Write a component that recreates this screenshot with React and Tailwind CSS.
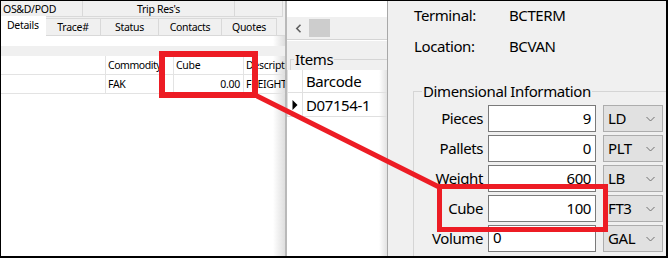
import React from 'react';

const dims = [
  { label: 'Pieces', value: '9', unit: 'LD' },
  { label: 'Pallets', value: '0', unit: 'PLT' },
  { label: 'Weight', value: '600', unit: 'LB' },
  { label: 'Cube', value: '100', unit: 'FT3' },
  { label: 'Volume', value: '0', unit: 'GAL', alignLeft: true },
];

const tabs = [
  { name: 'Details', w: 'w-[45px]', active: true },
  { name: 'Trace#', w: 'w-[55px]' },
  { name: 'Status', w: 'w-[58px]' },
  { name: 'Contacts', w: 'w-[63px]' },
  { name: 'Quotes', w: 'w-[55px]' },
];

function Chevron() {
  return (
    <svg width="9" height="6" viewBox="0 0 9 6" className="shrink-0">
      <polyline points="0.5,1 4.5,5 8.5,1" fill="none" stroke="#707070" strokeWidth="1" />
    </svg>
  );
}

function LeftPanel() {
  return (
    <div className="flex w-[286px] shrink-0 flex-col border-r-2 border-[#b9b9b9] text-[10.5px] tracking-[-0.3px]">
      {/* upper tab row */}
      <div className="flex h-[16px] shrink-0 bg-[#f0f0f0] leading-[16px]">
        <div className="w-[82px] border-r border-b border-[#d9d9d9] pl-[2px]">OS&amp;D/POD</div>
        <div className="w-[152px] border-r border-b border-[#d9d9d9] text-center">Trip Res's</div>
        <div className="w-[48px] border-r border-b border-[#d9d9d9]" />
      </div>
      {/* lower tab row */}
      <div className="flex h-[19px] shrink-0 bg-[#f0f0f0]">
        {tabs.map((t) => (
          <div
            key={t.name}
            className={
              t.active
                ? `${t.w} -mt-[1px] bg-white pl-[6px] leading-[19px]`
                : `${t.w} mt-[1px] border-r border-t border-b border-[#d9d9d9] text-center leading-[17px]`
            }
          >
            {t.name}
          </div>
        ))}
        <div className="flex-1 border-b border-[#d9d9d9]" />
      </div>
      {/* content */}
      <div className="flex flex-1 flex-col bg-[linear-gradient(to_right,#ffffff_calc(100%-12px),#dedede)]">
        <div className="h-[10px]" />
        <div className="h-[10px] bg-[#f0f0f0]" />
        <div className="flex h-[19px] border-b border-[#e3e3e3] leading-[18px]">
          <div className="w-[105px] border-r border-[#e3e3e3]" />
          <div className="w-[68px] whitespace-nowrap border-r border-[#e3e3e3] pl-[2px] tracking-[-0.45px]">Commodity</div>
          <div className="w-[70px] border-r border-[#e3e3e3] pl-[2px]">Cube</div>
          <div className="flex-1 overflow-hidden whitespace-nowrap pl-[2px]">Description</div>
        </div>
        <div className="flex h-[19px] border-b border-[#e3e3e3] leading-[18px]">
          <div className="w-[105px] border-r border-[#e3e3e3]" />
          <div className="w-[68px] border-r border-[#e3e3e3] pl-[2px]">FAK</div>
          <div className="w-[70px] border-r border-[#e3e3e3] pr-[3px] text-right">0.00</div>
          <div className="flex-1 overflow-hidden whitespace-nowrap pl-[2px]">FREIGHT</div>
        </div>
      </div>
    </div>
  );
}

function MiddlePanel() {
  return (
    <div className="flex w-[101px] shrink-0 flex-col border-r border-[#a8a8a8] text-[15px] tracking-[-0.4px]">
      <div className="h-[16px] shrink-0 bg-white" />
      <div className="flex h-[22px] shrink-0 items-center bg-[#f0f0f0]">
        <div className="flex w-[22px] justify-center">
          <svg width="7" height="9" viewBox="0 0 7 9">
            <polyline points="5.5,0.8 1.8,4.5 5.5,8.2" fill="none" stroke="#606060" strokeWidth="1.6" />
          </svg>
        </div>
        <div className="h-[18px] w-[21px] bg-[#cdcdcd]" />
      </div>
      <div className="h-[2px] shrink-0 border-t border-[#d4d4d4] bg-white" />
      <div className="h-[9px] shrink-0 bg-[#f0f0f0]" />
      <div className="flex h-[20px] shrink-0 items-start bg-[#f0f0f0]">
        <div className="ml-[3px] mt-[9px] h-[11px] w-[4px] border-l border-t border-[#d5d5d5]" />
        <span className="-mt-[1px] px-[1px] leading-[20px]">Items</span>
        <div className="mt-[9px] h-px flex-1 bg-[#d5d5d5]" />
      </div>
      <div className="flex flex-1 flex-col bg-[linear-gradient(to_right,#ffffff_calc(100%-8px),#e2e2e2)]">
        <div className="flex h-[23px] border-b border-[#e0e0e0]">
          <div className="w-[16px] border-x border-[#e0e0e0]" />
          <div className="pl-[3px] leading-[22px]">Barcode</div>
        </div>
        <div className="flex h-[24px] border-b border-[#e0e0e0]">
          <div className="flex w-[16px] items-center justify-center border-x border-[#e0e0e0]">
            <svg width="6" height="10" viewBox="0 0 6 10">
              <polygon points="0.5,0 5.5,5 0.5,10" fill="#000" />
            </svg>
          </div>
          <div className="pl-[3px] leading-[24px]">D07154-1</div>
        </div>
      </div>
    </div>
  );
}

function RightPanel() {
  return (
    <div className="flex flex-1 flex-col bg-[#f0f0f0] text-[15px] tracking-[-0.4px]">
      <div className="mt-[4px] flex h-[20px] pl-[26px] leading-[20px]">
        <span className="w-[95px]">Terminal:</span>
        <span>BCTERM</span>
      </div>
      <div className="mt-[11px] flex h-[20px] pl-[26px] leading-[20px]">
        <span className="w-[95px]">Location:</span>
        <span>BCVAN</span>
      </div>
      <fieldset className="ml-[25px] mt-[25px] flex-1 border-l border-t border-[#d5d5d5] pt-[4px]">
        <legend className="ml-[8px] px-[1px] leading-[20px]">Dimensional Information</legend>
        <div className="flex flex-col gap-[3px]">
          {dims.map((d) => (
            <div key={d.label} className="flex h-[27px] items-center">
              <div className="w-[69px] text-right">{d.label}</div>
              <div
                className={`ml-[5px] flex h-[27px] w-[108px] border border-[#7a7a7a] bg-white px-[4px] ${
                  d.alignLeft ? 'items-start justify-start leading-[22px]' : 'items-center justify-end'
                }`}
              >
                {d.value}
              </div>
              <div className="ml-[7px] flex h-[27px] w-[60px] items-center justify-between border border-[#adadad] bg-[#e1e1e1] pl-[4px] pr-[7px]">
                <span>{d.unit}</span>
                <Chevron />
              </div>
            </div>
          ))}
        </div>
      </fieldset>
    </div>
  );
}

export default function App() {
  return (
    <div className="relative h-[258px] w-[668px] overflow-hidden border border-r-2 border-b-2 border-black font-['Noto_Sans',sans-serif] text-black">
      <div className="flex h-full">
        <LeftPanel />
        <MiddlePanel />
        <RightPanel />
      </div>
      <svg
        width="668"
        height="258"
        viewBox="0 0 668 258"
        className="pointer-events-none absolute left-[-1px] top-[-1px]"
      >
        <rect x="162" y="54" width="93" height="41" fill="none" stroke="#ed1c24" strokeWidth="6" />
        <line x1="257" y1="96" x2="439" y2="187" stroke="#ed1c24" strokeWidth="5" />
        <rect x="439.5" y="186.5" width="166" height="43" fill="none" stroke="#ed1c24" strokeWidth="5" />
      </svg>
    </div>
  );
}
